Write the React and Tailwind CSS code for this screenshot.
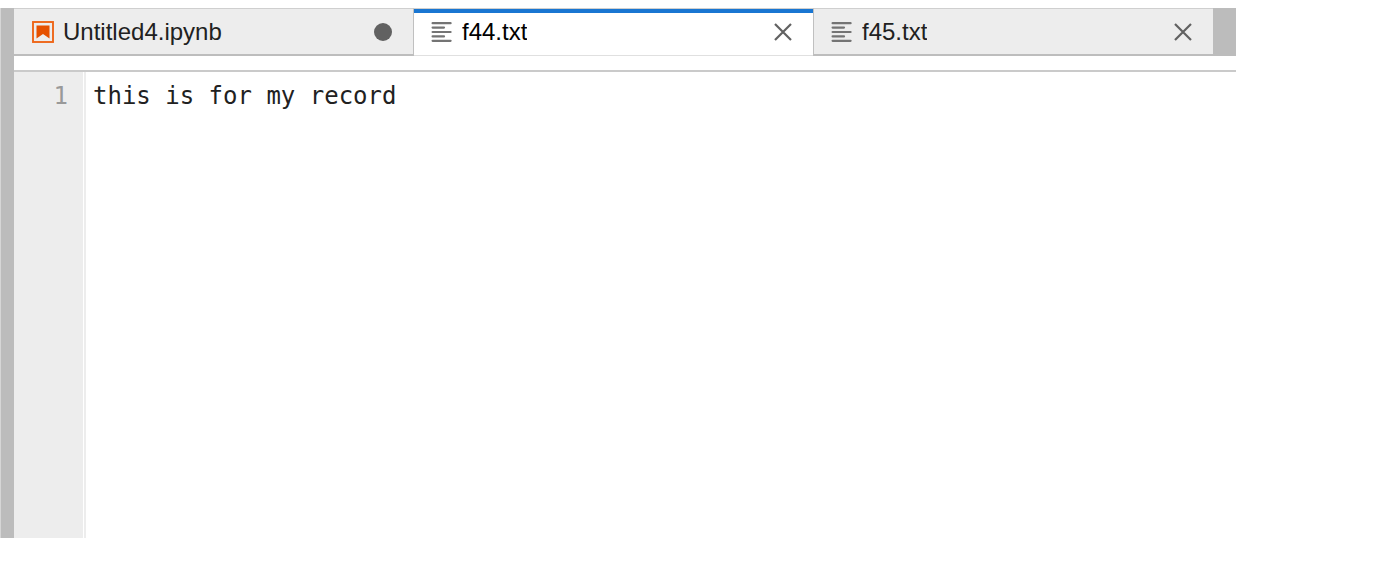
import { useState } from "react";

function NotebookIcon() {
  return (
    <svg className="size-[22px] shrink-0" viewBox="0 0 22 22" aria-hidden="true">
      <rect x="1" y="1" width="20" height="20" fill="none" stroke="#ee6518" strokeWidth="1.9" />
      <path d="M4.5 4.5h13v13L11 12.9l-6.5 4.6z" fill="#e65100" />
    </svg>
  );
}

function TextFileIcon() {
  return (
    <svg
      className="size-[22px] shrink-0"
      viewBox="0 0 22 22"
      fill="none"
      stroke="#747474"
      strokeWidth="2.2"
      strokeLinecap="round"
      aria-hidden="true"
    >
      <path d="M1.6 2.2h18M1.6 6.6h11.4M1.6 11h18M1.6 15.4h11.4M1.6 19.8h18" />
    </svg>
  );
}

function CloseIcon() {
  return (
    <svg className="size-[18px]" viewBox="0 0 18 18" fill="none" stroke="#616161" strokeWidth="2.2" aria-hidden="true">
      <path d="M1 1l16 16M17 1L1 17" />
    </svg>
  );
}

function DirtyIcon() {
  return (
    <svg className="size-[18px]" viewBox="0 0 18 18" aria-hidden="true">
      <circle cx="9" cy="9" r="9" fill="#616161" />
    </svg>
  );
}

const tabs = [
  { name: "Untitled4.ipynb", Icon: NotebookIcon, dirty: true },
  { name: "f44.txt", Icon: TextFileIcon },
  { name: "f45.txt", Icon: TextFileIcon },
];

function Tab({ name, Icon, dirty, active, onSelect }) {
  return (
    <div
      className={
        active
          ? "flex min-w-0 max-w-[399px] flex-1 items-center border-t border-b border-t-[#cfcfcf] border-b-[#e0e0e0] bg-white pr-[21px] pl-[17px] text-black shadow-[inset_0_4px_0_#1976d2]"
          : "flex min-w-0 max-w-[400px] flex-1 items-center border-t border-r border-b-2 border-t-[#cfcfcf] border-r-[#c0c0c0] border-b-[#bdbdbd] bg-[#ededed] pr-[21px] pl-[18px] text-[#212121] last:border-r-0 last:border-l last:border-l-[#c0c0c0] last:pl-[17px]"
      }
    >
      <button
        type="button"
        role="tab"
        aria-selected={active}
        onClick={onSelect}
        className="flex min-w-0 flex-1 items-center gap-[9px] text-left"
      >
        <Icon />
        <span className="truncate">{name}</span>
      </button>
      <button type="button" aria-label={`Close ${name}`} className="flex shrink-0">
        {dirty ? <DirtyIcon /> : <CloseIcon />}
      </button>
    </div>
  );
}

export default function App() {
  const [active, setActive] = useState("f44.txt");
  const [text, setText] = useState("this is for my record");

  return (
    <div className="h-screen bg-white pt-2 pr-[162px] pb-10">
      <main className="flex h-full flex-col border-l border-[#d6d6d6]">
        <div className="flex min-h-0 flex-1 border-l-[13px] border-[#bcbcbc]">
          <section className="flex min-w-0 flex-1 flex-col">
            <div
              role="tablist"
              className="flex h-12 shrink-0 bg-[#bcbcbc] font-['Liberation_Sans',Arial,sans-serif] text-2xl leading-7"
            >
              {tabs.map((tab) => (
                <Tab key={tab.name} {...tab} active={tab.name === active} onSelect={() => setActive(tab.name)} />
              ))}
            </div>
            <div className="h-[14px] shrink-0 bg-white" />
            <div className="flex min-h-0 flex-1 border-t-2 border-[#cacaca] font-['DejaVu_Sans_Mono',monospace] text-2xl leading-8">
              <div className="flex shrink-0 border-r-2 border-[#ededed] bg-white pr-px">
                <div className="w-[69px] bg-[#ededed] pt-2 pr-[15px] text-right text-[#999999]">1</div>
              </div>
              <textarea
                aria-label="File contents"
                value={text}
                onChange={(event) => setText(event.target.value)}
                spellCheck={false}
                className="min-w-0 flex-1 resize-none bg-white pt-2 pl-[7px] text-[#212121] outline-none"
              />
            </div>
          </section>
        </div>
      </main>
    </div>
  );
}
